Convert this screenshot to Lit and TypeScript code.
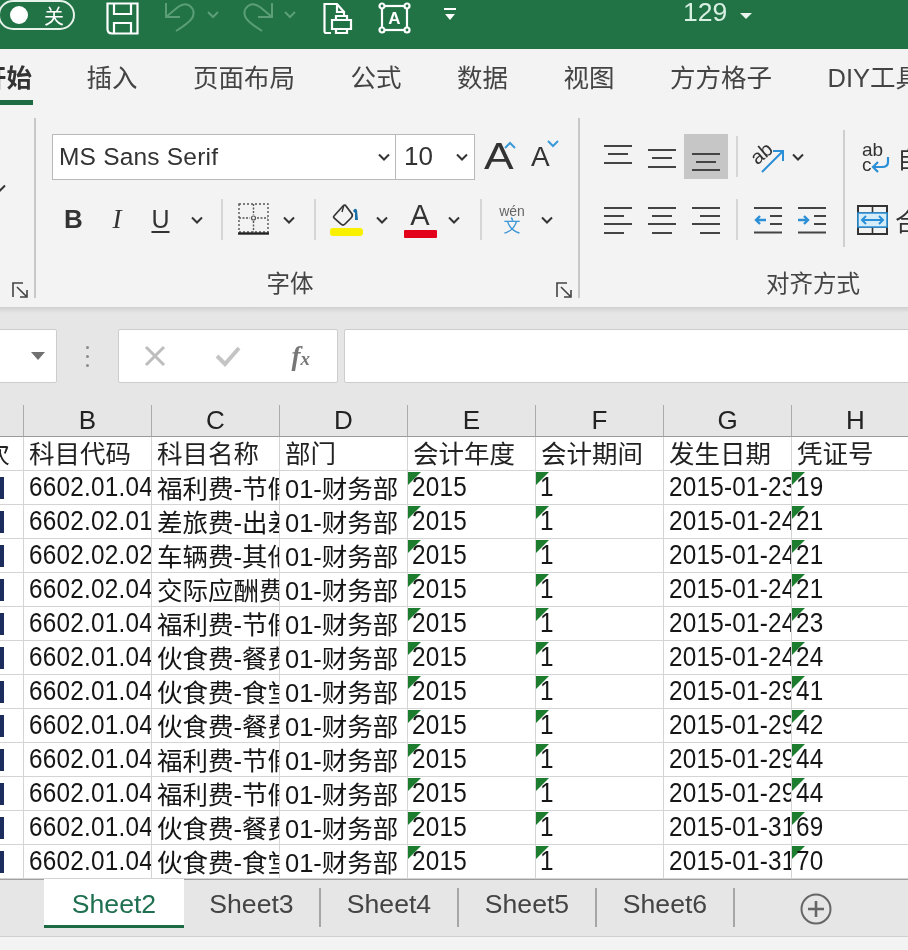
import { LitElement, html, css, svg } from 'lit';
import { customElement } from 'lit/decorators.js';
import type { TemplateResult } from 'lit';

const chev = html`<svg class="chev" width="12" height="8" viewBox="0 0 12 8"><path d="M1 1.5L6 6.5L11 1.5" fill="none" stroke="#333" stroke-width="2"/></svg>`;

// three or four horizontal strokes, [x1, x2, y]
function lines(rows: number[][]): TemplateResult
{
  return html`<svg width="28" height="30" viewBox="0 0 28 30">
    ${rows.map((r) => svg`<line x1=${r[0]} x2=${r[1]} y1=${r[2]} y2=${r[2]} stroke="#444" stroke-width="2"/>`)}
  </svg>`;
}

const launcher = html`<svg width="16" height="16" viewBox="0 0 16 16" fill="none" stroke="#444" stroke-width="1.6">
  <path d="M1 15V1H11"/><path d="M5 5L14 14M8 15H15V8"/>
</svg>`;

const journal = [
  ['6602.01.04', '福利费-节假日', '2015-01-23', '19'],
  ['6602.02.01', '差旅费-出差', '2015-01-24', '21'],
  ['6602.02.02', '车辆费-其他', '2015-01-24', '21'],
  ['6602.02.04', '交际应酬费', '2015-01-24', '21'],
  ['6602.01.04', '福利费-节假日', '2015-01-24', '23'],
  ['6602.01.04', '伙食费-餐费', '2015-01-24', '24'],
  ['6602.01.04', '伙食费-食堂', '2015-01-29', '41'],
  ['6602.01.04', '伙食费-餐费', '2015-01-29', '42'],
  ['6602.01.04', '福利费-节假日', '2015-01-29', '44'],
  ['6602.01.04', '福利费-节假日', '2015-01-29', '44'],
  ['6602.01.04', '伙食费-餐费', '2015-01-31', '69'],
  ['6602.01.04', '伙食费-食堂', '2015-01-31', '70'],
];

@customElement('app-root')
export class AppRoot extends LitElement
{
  static styles = css`
    :host{
      display: block;
      width: 908px;
      height: 950px;
      overflow: hidden;
      font-family: "Liberation Sans", "Noto Sans CJK SC", sans-serif;
      color: #333;
    }
    .page{ width: 908px; height: 950px; overflow: hidden; filter: blur(.4px); background: #f3f3f3; }
    svg{ display: block; }

    /* title bar */
    .title{ height: 49px; background: #217346; display: grid; align-items: start;
      grid-template-columns: 106px 59px 42px 36px 41px 39px 55px 65px 240px auto; color: #fff; }
    .toggle{ margin-left: -2px; width: 77px; height: 30px; border: 2px solid #e6f2ea; border-radius: 17px; box-sizing: border-box;
      display: flex; align-items: center; justify-content: space-between; padding: 0 9px 0 10px; font-size: 20px; }
    .knob{ width: 18px; height: 18px; border-radius: 50%; background: #fff; }
    .t-icon{ margin-top: 2px; }
    .t-chev{ margin-top: 11px; }
    .t-qat{ margin-top: 8px; }
    .doc-no{ display: flex; align-items: center; gap: 13px; font-size: 26.5px; color: #d8f0e2; height: 25px; }
    .caret{ width: 0; height: 0; border: 6px solid transparent; border-top: 6px solid #e8f5ee; border-bottom: 0; margin-top: 6px; }

    /* ribbon tabs */
    .tabs{ height: 58px; display: flex; gap: 55.5px; background: #f3f3f3; font-size: 25.5px; color: #444; white-space: nowrap; overflow: hidden; }
    .tab{ line-height: 58px; height: 56px; flex: none; }
    .tab.on{ margin-left: -19px; margin-right: -2px; font-weight: 700; color: #333; border-bottom: 5px solid #1d6b45; height: 51px; width: 52px; }

    /* ribbon */
    .ribbon{ height: 200px; display: flex; overflow: hidden; background: #f3f3f3; }
    .vsep{ flex: none; width: 2px; height: 180px; margin-top: 11px; background: #c8c8c8; }
    .stub{ flex: none; width: 34px; position: relative; }
    .stub-tick{ position: absolute; left: -6px; top: 77px; }
    .group{ flex: none; position: relative; height: 200px; box-sizing: border-box; padding-top: 27px; }
    .launch{ position: absolute; bottom: 9px; }
    .stub .launch{ left: 12px; }
    .font{ width: 542px; padding-left: 16px; }
    .font .launch{ left: 520px; }
    .align{ width: 466px; padding-left: 16px; }
    .g-label{ position: absolute; top: 162px; left: 0; font-size: 23.5px; line-height: 30px; color: #444; text-align: center; }
    .font .g-label{ width: 508px; }
    .align .g-label{ width: 466px; }
    .f-row1{ display: flex; height: 45px; align-items: center; }
    .combo{ box-sizing: border-box; height: 46px; background: #fff; border: 1px solid #b9b9b9; display: flex; align-items: center; justify-content: space-between; color: #333; }
    .c-name{ width: 344px; padding: 0 5px 0 6px; font-size: 24.5px; letter-spacing: .2px; }
    .c-size{ width: 80px; padding: 0 6px 0 8px; font-size: 26px; margin-left: -1px; }
    .grow{ position: relative; font-size: 37px; color: #333; line-height: 45px; }
    .grow-up{ margin-left: 9px; width: 47px; }
    .grow-up span{ display: inline-block; transform: scaleX(1.2); transform-origin: left center; font-weight: 400; }
    .grow-dn{ font-size: 28px; width: 40px; }
    .grow svg{ position: absolute; top: 7px; left: 18px; }
    .grow-dn svg{ top: 6px; left: 16px; }
    .f-row2{ display: grid; margin-top: 18px; height: 45px; align-items: center; justify-items: center;
      grid-template-columns: 43px 44px 43px 30px 20px 42px 30px 22px 40px 31px 46px 22px 32px 30px 40px; }
    .vs{ width: 2px; height: 41px; background: #d6d6d6; }
    .b{ font-size: 26px; font-weight: 700; }
    .i{ font-family: "Liberation Serif", serif; font-size: 27px; font-style: italic; }
    .u{ font-size: 25px; text-decoration: underline; text-underline-offset: 3px; }
    .tint{ width: 34px; display: flex; flex-direction: column; align-items: center; }
    .tint-a{ font-size: 29px; line-height: 26px; color: #333; }
    .bar{ width: 33px; height: 8px; }
    .bar.y{ background: #f8f000; border-radius: 3px; }
    .bar.r{ background: #e2001a; margin-top: 2px; border-radius: 1px; }
    .wen{ display: flex; flex-direction: column; align-items: center; line-height: 1; }
    .wen span:first-child{ font-size: 14px; color: #666; }
    .wen span:last-child{ font-size: 17px; color: #3b97d6; margin-top: 0; }

    .a-wrap{ display: flex; }
    .a-left{ width: 238px; flex: none; }
    .a-row1{ display: grid; height: 45px; align-items: center; justify-items: center; grid-template-columns: 44px 44px 44px 18px 44px 16px; }
    .a-row2{ display: grid; margin-top: 18px; height: 45px; align-items: center; justify-items: center; grid-template-columns: 44px 44px 44px 18px 44px 44px; }
    .pressed{ width: 44px; height: 45px; background: #c6c6c6; display: flex; align-items: center; justify-content: center; }
    .a-sep{ flex: none; width: 2px; height: 117px; margin: -4px 8px 0 9px; background: #cfcfcf; }
    .a-right{ display: flex; flex-direction: column; padding-left: 9px; }
    .a-cell{ display: flex; align-items: center; gap: 7px; height: 45px; font-size: 25px; color: #333; }
    .a-cell + .a-cell{ margin-top: 18px; }
    .a-merge{ margin-left: -5px; }

    /* formula bar */
    .fbar{ height: 98px; box-sizing: border-box; padding-top: 22px; background: linear-gradient(#cfcfcf, #e6e6e6 6px); display: flex; }
    .fbox{ box-sizing: border-box; height: 54px; background: #fff; border: 1px solid #cdcdcd; border-radius: 2px; }
    .name{ flex: none; width: 59px; margin-left: -2px; display: flex; align-items: center; justify-content: flex-end; padding-right: 11px; }
    .name i{ width: 0; height: 0; border: 7px solid transparent; border-top: 8px solid #707070; border-bottom: 0; }
    .dots{ flex: none; width: 61px; display: flex; flex-direction: column; align-items: center; justify-content: center; gap: 6px; height: 54px; }
    .dots i{ width: 3px; height: 3px; background: #8a8a8a; border-radius: 50%; }
    .fn{ flex: none; width: 220px; display: grid; grid-template-columns: repeat(3, 1fr); align-items: center; justify-items: center; }
    .fx{ font-family: "Liberation Serif", serif; font-style: italic; font-weight: 700; font-size: 27px; color: #777; }
    .fx small{ font-size: 19px; }
    .input{ flex: 1; margin: 0 -2px 0 6px; }

    /* sheet */
    .sheet{ display: grid; grid-template-columns: 23px repeat(7, 128px); width: 908px; overflow: hidden; }
    .colh{ height: 32px; box-sizing: border-box; background: #e6e6e6; border-bottom: 1px solid #9a9a9a; border-left: 1px solid #ababab;
      text-align: center; font-size: 26px; line-height: 30px; color: #222; }
    .colh.first{ border-left: 0; }
    .cell{ position: relative; height: 34px; box-sizing: border-box; background: #fff; border-bottom: 1px solid #d4d4d4; border-left: 1px solid #d4d4d4;
      display: flex; align-items: center; padding-left: 5px; overflow: hidden; white-space: nowrap; font-size: 25.5px; color: #161616; }
    .cell.cn{ padding-bottom: 3px; }
    .cell.a{ border-left: 0; padding: 0; justify-content: flex-end; }
    .tip{ width: 4px; height: 22px; background: #1c2c5c; margin-right: auto; }
    .num{ display: inline-block; transform: scaleX(.9); transform-origin: left center; font-size: 27px; letter-spacing: .25px; }
    .flag::before{ content: ""; position: absolute; left: 0; top: 1px; width: 13px; height: 13px; background: #1b7d2d; clip-path: polygon(0 0, 100% 0, 0 100%); }
    .flag{ padding-left: 4px; }
    .cell.h{ color: #222; padding-bottom: 4px; }
    .a-h{ margin-right: 13px; flex: none; }

    /* sheet tabs */
    .stabs{ height: 58px; box-sizing: border-box; border-top: 1px solid #a0a0a0; border-bottom: 1px solid #cfcfcf; background: #e6e6e6; display: flex; padding-left: 44px; font-size: 26.6px; color: #444; }
    .st{ flex: none; width: 138px; height: 39px; margin-top: 8px; line-height: 32px; text-align: center; border-right: 2px solid #a6a6a6; box-sizing: border-box; }
    .st.on{ width: 140px; height: 49px; margin-top: -1px; background: #fff; color: #1f7050; border-right: 0; border-bottom: 3px solid #1d6b45; line-height: 50px; }
    .st.next{ width: 137px; }
    .plus{ margin: 13px 0 0 65px; }
  `;

  private undoIcon(flip: boolean): TemplateResult
  {
    return html`<svg width="30" height="32" viewBox="0 0 30 32" fill="none" stroke="#5b9e78" stroke-width="2"
      style=${flip ? 'transform:scaleX(-1)' : ''}>
      <path d="M1 3V17H15"/><path d="M1 17L13 7Q20 2 25 6T28 16Q27 21 11 31"/>
    </svg>`;
  }

  private titleBar(): TemplateResult
  {
    return html`<div class="title">
      <div class="toggle"><span class="knob"></span><span>关</span></div>
      <svg class="t-icon" width="33" height="33" viewBox="0 0 33 33" fill="none" stroke="#fff" stroke-width="2.2">
        <path d="M1.5 1.5H31.5V31.5H6Q1.5 31.5 1.5 27Z"/><path d="M8 1.5V12H25V1.5M8 31.5V21H25V31.5"/>
      </svg>
      ${this.undoIcon(false)}
      <svg class="t-chev" width="12" height="8" viewBox="0 0 12 8"><path d="M1 1L6 6L11 1" fill="none" stroke="#5b9e78" stroke-width="2"/></svg>
      ${this.undoIcon(true)}
      <svg class="t-chev" width="12" height="8" viewBox="0 0 12 8"><path d="M1 1L6 6L11 1" fill="none" stroke="#5b9e78" stroke-width="2"/></svg>
      <svg class="t-icon" width="30" height="33" viewBox="0 0 30 33" fill="none" stroke="#fff" stroke-width="2.2">
        <path d="M8 31H3Q1.5 31 1.5 29V2H14L21 10V13M14 2V10H21"/>
        <path d="M9 18H28V27H9ZM13 27V31H24V27M13 18V14H24V18"/>
      </svg>
      <svg class="t-icon" width="33" height="32" viewBox="0 0 33 32" fill="none" stroke="#fff" stroke-width="2.2">
        <rect x="4" y="4" width="25" height="24"/>
        <circle cx="4" cy="4" r="2.5" fill="#217346"/><circle cx="29" cy="4" r="2.5" fill="#217346"/>
        <circle cx="4" cy="28" r="2.5" fill="#217346"/><circle cx="29" cy="28" r="2.5" fill="#217346"/>
        <text x="16.5" y="22" text-anchor="middle" font-size="17" font-weight="700" fill="#fff" stroke="none" font-family="Liberation Sans">A</text>
      </svg>
      <svg class="t-qat" width="14" height="14" viewBox="0 0 14 14"><path d="M1 1H13" stroke="#fff" stroke-width="2"/><path d="M2 6H12L7 12Z" fill="#fff"/></svg>
      <div class="doc-no"><span>129</span><span class="caret"></span></div>
    </div>`;
  }

  private fontGroup(): TemplateResult
  {
    return html`<div class="group font">
      <div class="f-row1">
        <div class="combo c-name"><span>MS Sans Serif</span>${chev}</div>
        <div class="combo c-size"><span>10</span>${chev}</div>
        <div class="grow grow-up"><span>A</span><svg width="12" height="8" viewBox="0 0 12 8" style="left:20px"><path d="M1 7L6 2L11 7" fill="none" stroke="#3a9ad9" stroke-width="2"/></svg></div>
        <div class="grow grow-dn">A<svg width="12" height="8" viewBox="0 0 12 8"><path d="M1 1L6 6L11 1" fill="none" stroke="#3a9ad9" stroke-width="2"/></svg></div>
      </div>
      <div class="f-row2">
        <span class="b">B</span><span class="i">I</span><span class="u">U</span>${chev}<span class="vs"></span>
        <svg width="31" height="33" viewBox="0 0 31 33" fill="none" stroke="#555">
          <rect x="1" y="1" width="29" height="28" stroke-dasharray="2 2" stroke-width="1.4"/>
          <path d="M15.5 1V12M15.5 18V29M1 15H12M19 15H30" stroke-dasharray="2 1.5" stroke-width="1.4"/>
          <circle cx="15.5" cy="15" r="2" stroke-width="1.2"/>
          <path d="M0 30.5H31" stroke="#222" stroke-width="2.4"/>
        </svg>
        ${chev}<span class="vs"></span>
        <div class="tint">
          <svg width="30" height="25" viewBox="0 0 30 25" fill="none" stroke="#333" stroke-width="1.7">
            <path d="M3 13L12 3Q14 1 15 3L21 11Q22 13 20 15L14 21Q12 23 10 21L3 15Q2 14 3 13Z"/>
            <path d="M13 2L11 9" stroke-width="1.4"/>
            <path d="M22 8Q24 4 26 7L27 17H24L24 10Z" fill="#1d6fa8" stroke="none"/>
          </svg>
          <span class="bar y"></span>
        </div>
        ${chev}
        <div class="tint"><span class="tint-a">A</span><span class="bar r"></span></div>
        ${chev}<span class="vs"></span>
        <div class="wen"><span>wén</span><span>文</span></div>
        ${chev}
      </div>
      <div class="g-label">字体</div>
      <div class="launch">${launcher}</div>
    </div>`;
  }

  private indentIcon(right: boolean): TemplateResult
  {
    const arrow = right ? 'M0 12H9M6 8L10 12L6 16' : 'M12 12H3M6 8L2 12L6 16';
    return html`<svg width="28" height="28" viewBox="0 0 28 28" fill="none">
      <path d="M0 2H28M16 10H28M16 18H28M0 26.5H28" stroke="#444" stroke-width="2"/>
      <g transform="translate(0 2)"><path d=${arrow} stroke="#2a8fd6" stroke-width="2.4"/></g>
    </svg>`;
  }

  private alignGroup(): TemplateResult
  {
    return html`<div class="group align">
      <div class="a-wrap">
        <div class="a-left">
          <div class="a-row1">
            ${lines([[0, 28, 4], [4, 24, 12], [0, 28, 21]])}
            ${lines([[0, 28, 8], [4, 24, 16], [0, 28, 25]])}
            <div class="pressed">${lines([[0, 28, 12], [4, 24, 20], [0, 28, 28]])}</div>
            <span class="vs"></span>
            <svg width="34" height="32" viewBox="0 0 34 32" fill="none">
              <text x="1" y="20" font-size="20" fill="#333" transform="rotate(-40 10 15)" font-family="Liberation Sans">ab</text>
              <path d="M11 31L31 11M22 10H32V20" stroke="#2a8fd6" stroke-width="2"/>
            </svg>
            ${chev}
          </div>
          <div class="a-row2">
            ${lines([[0, 28, 3], [0, 20, 11], [0, 28, 19], [0, 20, 28]])}
            ${lines([[0, 28, 3], [4, 24, 11], [0, 28, 19], [4, 24, 28]])}
            ${lines([[0, 28, 3], [8, 28, 11], [0, 28, 19], [8, 28, 28]])}
            <span class="vs"></span>
            ${this.indentIcon(false)}
            ${this.indentIcon(true)}
          </div>
        </div>
        <div class="a-sep"></div>
        <div class="a-right">
          <div class="a-cell">
            <svg width="28" height="32" viewBox="0 0 28 32" fill="none">
              <text x="0" y="15" font-size="19" fill="#333" font-family="Liberation Sans">ab</text>
              <text x="0" y="30" font-size="19" fill="#333" font-family="Liberation Sans">c</text>
              <path d="M26 16V21Q26 26 20 26H11M16 21L11 26L16 31" stroke="#2a8fd6" stroke-width="2.2"/>
            </svg>
            <span>自动换行</span>
          </div>
          <div class="a-cell">
            <svg class="a-merge" width="31" height="30" viewBox="0 0 31 30" fill="none">
              <rect x="1" y="1" width="29" height="28" stroke="#333" stroke-width="2"/>
              <path d="M1 8H30M1 22H30M15.5 1V8M15.5 22V29" stroke="#333" stroke-width="1.6"/>
              <path d="M1 8H30V22H1Z" fill="#d7ecf9" stroke="#2a8fd6" stroke-width="1.6"/>
              <path d="M5 15H26M9 11L5 15L9 19M22 11L26 15L22 19" stroke="#2a8fd6" stroke-width="2"/>
            </svg>
            <span>合并后居中</span>
          </div>
        </div>
      </div>
      <div class="g-label">对齐方式</div>
    </div>`;
  }

  private formulaBar(): TemplateResult
  {
    return html`<div class="fbar">
      <div class="fbox name"><i></i></div>
      <div class="dots"><i></i><i></i><i></i></div>
      <div class="fbox fn">
        <svg width="22" height="22" viewBox="0 0 22 22"><path d="M2 2L20 20M20 2L2 20" stroke="#bdbdbd" stroke-width="3"/></svg>
        <svg width="26" height="22" viewBox="0 0 26 22" fill="none"><path d="M2 11L10 19L24 3" stroke="#c4c4c4" stroke-width="4"/></svg>
        <span class="fx">f<small>x</small></span>
      </div>
      <div class="fbox input"></div>
    </div>`;
  }

  private sheet(): TemplateResult
  {
    const heads = ['科目代码', '科目名称', '部门', '会计年度', '会计期间', '发生日期', '凭证号'];
    return html`<div class="sheet">
      <div class="colh first"></div>
      ${['B', 'C', 'D', 'E', 'F', 'G', 'H'].map((c) => html`<div class="colh">${c}</div>`)}
      <div class="cell a h"><span class="a-h">次</span></div>
      ${heads.map((h) => html`<div class="cell h">${h}</div>`)}
      ${journal.map((r) => html`
        <div class="cell a"><span class="tip"></span></div>
        <div class="cell"><span class="num">${r[0]}</span></div>
        <div class="cell cn">${r[1]}</div>
        <div class="cell cn">01-财务部</div>
        <div class="cell flag"><span class="num">2015</span></div>
        <div class="cell flag"><span class="num">1</span></div>
        <div class="cell"><span class="num">${r[2]}</span></div>
        <div class="cell flag"><span class="num">${r[3]}</span></div>
      `)}
    </div>`;
  }

  render(): TemplateResult
  {
    return html`<div class="page">
      ${this.titleBar()}
      <div class="tabs">
        <span class="tab on">开始</span>
        ${['插入', '页面布局', '公式', '数据', '视图', '方方格子', 'DIY工具'].map((t) => html`<span class="tab">${t}</span>`)}
      </div>
      <div class="ribbon">
        <div class="stub">
          <div class="stub-tick">${chev}</div>
          <div class="launch">${launcher}</div>
        </div>
        <div class="vsep"></div>
        ${this.fontGroup()}
        <div class="vsep"></div>
        ${this.alignGroup()}
      </div>
      ${this.formulaBar()}
      ${this.sheet()}
      <div class="stabs">
        <div class="st on">Sheet2</div>
        <div class="st next">Sheet3</div>
        <div class="st">Sheet4</div>
        <div class="st">Sheet5</div>
        <div class="st">Sheet6</div>
        <svg class="plus" width="32" height="32" viewBox="0 0 32 32" fill="none" stroke="#666" stroke-width="2">
          <circle cx="16" cy="16" r="14.5"/><path d="M16 8V24M8 16H24" stroke-width="2.6"/>
        </svg>
      </div>
    </div>`;
  }
}
